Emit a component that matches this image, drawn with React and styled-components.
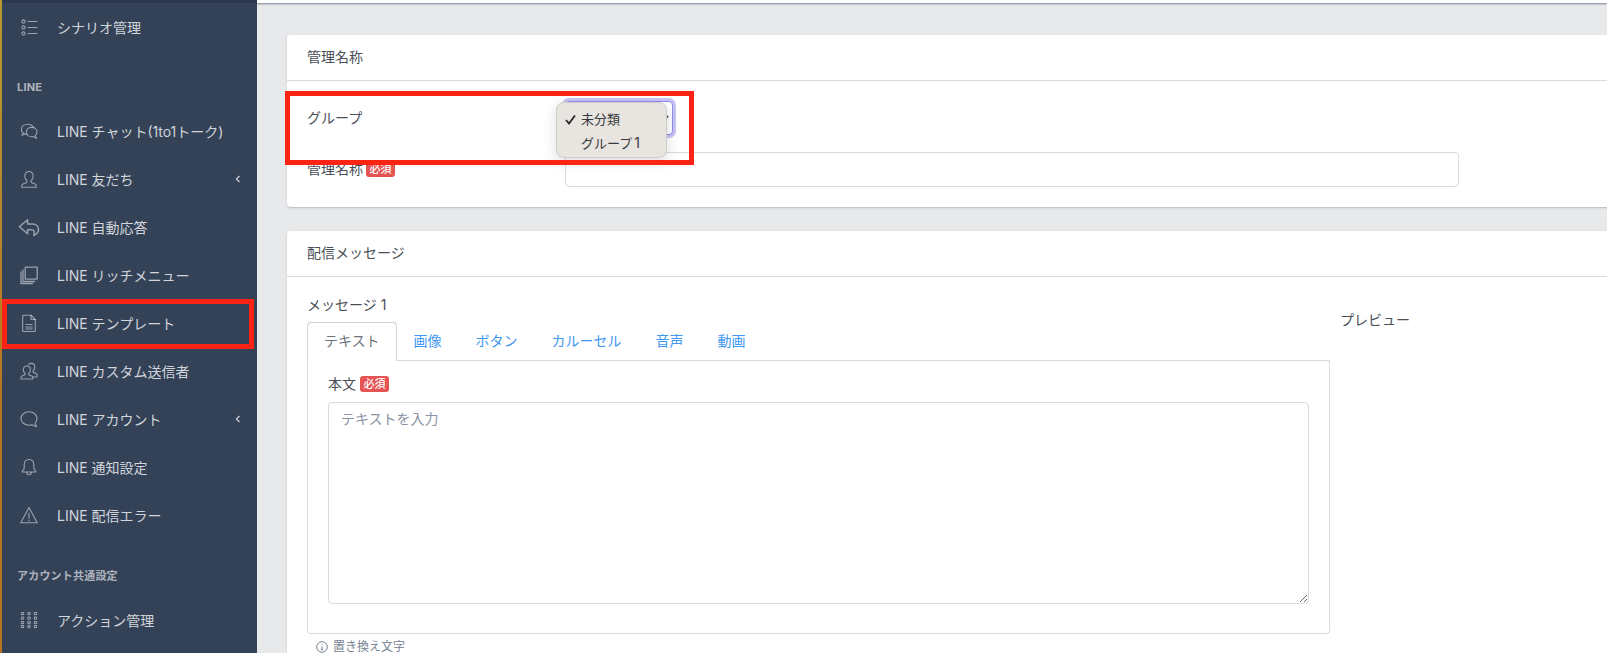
import React from 'react';
import styled, { createGlobalStyle } from 'styled-components';

const GlobalStyle = createGlobalStyle`
  html, body {
    margin: 0;
    padding: 0;
    background: #e8e9eb;
  }
  body {
    font-family: 'Inter', 'Noto Sans CJK JP', sans-serif;
    font-size: 14px;
    line-height: 21px;
    color: #4a4f57;
  }
  * {
    box-sizing: border-box;
  }
`;

const Page = styled.div`
  position: relative;
  display: flex;
  width: 1607px;
  height: 653px;
  overflow: hidden;
`;

const Sidebar = styled.aside`
  flex: 0 0 257px;
  display: flex;
  flex-direction: column;
  background: #344258;
  border-left: 2px solid;
  border-image: linear-gradient(180deg, #b59a30, #b8761f 60%, #b8761f) 1;
`;

const SidebarTop = styled.div`
  height: 3px;
  flex: none;
  background: #2b3750;
`;

const NavTitle = styled.div`
  height: ${p => p.$height}px;
  padding: ${p => p.$pad}px 0 0 15px;
  font-size: 11px;
  line-height: 24px;
  font-weight: 700;
  letter-spacing: 0.2px;
  color: rgba(255, 255, 255, 0.62);
`;

const NavRow = styled.div`
  height: 48px;
  flex: none;
  display: flex;
  align-items: center;
  padding: 0 16px 0 18px;
  color: rgba(255, 255, 255, 0.78);
  font-size: 14px;
`;

const NavIcon = styled.svg`
  width: 18px;
  height: 18px;
  flex: none;
  margin-right: 19px;
  overflow: visible;
  fill: none;
  stroke: rgba(255, 255, 255, 0.5);
  stroke-width: 1.1;
  stroke-linejoin: round;
  stroke-linecap: round;
`;

const NavLabel = styled.span`
  flex: 1;
  white-space: nowrap;
`;

const Chevron = styled.svg`
  width: 6px;
  height: 8px;
  flex: none;
  fill: none;
  stroke: rgba(255, 255, 255, 0.7);
  stroke-width: 1.4;
`;

const Main = styled.main`
  flex: 1;
  min-width: 0;
  display: flex;
  flex-direction: column;
`;

const TopStrip = styled.div`
  height: 3px;
  flex: none;
  background: #fff;
  box-shadow: 0 1px 2px rgba(40, 50, 70, 0.55);
`;

const Content = styled.div`
  padding: 32px 0 0 30px;
  margin-right: -8px;
`;

const Card = styled.section`
  background: #fff;
  border-radius: 4px;
  box-shadow: 0 1px 1px rgba(60, 75, 100, 0.16), 0 1px 3px rgba(60, 75, 100, 0.14);
  margin-bottom: 24px;
`;

const CardHeader = styled.header`
  height: 46px;
  padding: 0 20px 2px;
  display: flex;
  align-items: center;
  border-bottom: 1px solid #d8dbe0;
`;

const FormBody = styled.div`
  padding: 20px 0 20px 20px;
`;

const FormRow = styled.div`
  display: flex;
  margin-bottom: ${p => p.$gap || 0}px;
`;

const FormLabel = styled.label`
  flex: 0 0 258px;
  padding-top: ${p => p.$top}px;
  display: flex;
  align-items: flex-start;
  gap: 3px;
`;

const Required = styled.span`
  display: inline-block;
  width: 29px;
  height: 16px;
  margin-top: 3px;
  border-radius: 3px;
  background: #e55353;
  color: #fff;
  font-size: 11px;
  line-height: 16px;
  font-weight: 500;
  text-align: center;
`;

const SelectWrap = styled.div`
  position: relative;
  width: 108px;
  height: 34px;
`;

const SelectBox = styled.select`
  display: block;
  width: 100%;
  height: 100%;
  padding: 0 8px;
  font: inherit;
  color: #4a4f57;
  background: #fff;
  border: 1px solid #958bec;
  border-radius: 4px;
  box-shadow: 0 0 0 3px #c8c4f3;
  outline: none;
`;

const Menu = styled.div`
  position: absolute;
  left: -9px;
  top: 1px;
  width: 111px;
  height: 56px;
  padding: 5px 0;
  background: #e8e5e1;
  border: 1px solid #cfcdc9;
  border-radius: 8px;
  box-shadow: 0 4px 14px rgba(0, 0, 0, 0.14);
  font-size: 13px;
  color: #36393d;
`;

const MenuItem = styled.div`
  position: relative;
  height: 23px;
  line-height: 23px;
  padding-left: 24px;
  white-space: nowrap;
`;

const MenuCheck = styled.svg`
  position: absolute;
  left: 8px;
  top: 6px;
  width: 11px;
  height: 11px;
  fill: none;
  stroke: #26282b;
  stroke-width: 1.8;
`;

const MenuDigit = styled.span`
  margin-left: 2px;
  font-size: 14px;
`;

const TextInput = styled.input`
  display: block;
  width: 894px;
  height: 35px;
  border: 1px solid #d8dbe0;
  border-radius: 4px;
  background: #fff;
  outline: none;
`;

const MessageBody = styled.div`
  display: flex;
  padding: 17px 0 0 20px;
`;

const EditorColumn = styled.div`
  flex: 0 0 1023px;
`;

const PreviewColumn = styled.div`
  padding: 15px 0 0 10px;
`;

const MessageLabel = styled.div`
  height: 21px;
  margin-bottom: 7px;
`;

const Tabs = styled.div`
  display: flex;
  height: 39px;
  border-bottom: 1px solid #d8dbe0;
`;

const Tab = styled.div`
  height: ${p => (p.$active ? '39px' : '38px')};
  padding: 0 16px;
  line-height: 36px;
  border: 1px solid ${p => (p.$active ? '#d0d3d8' : 'transparent')};
  border-bottom: ${p => (p.$active ? '1px solid #fff' : '0')};
  border-radius: 4px 4px 0 0;
  background: ${p => (p.$active ? '#fff' : 'transparent')};
  color: ${p => (p.$active ? '#6c727b' : '#3f97f0')};
`;

const TabPanel = styled.div`
  padding: 12px 20px 29px;
  border: 1px solid #d8dbe0;
  border-top: 0;
  border-radius: 0 0 4px 4px;
`;

const BodyLabel = styled.div`
  display: flex;
  gap: 4px;
  height: 21px;
  margin-bottom: 8px;
`;

const BodyText = styled.textarea`
  display: block;
  width: 100%;
  height: 202px;
  padding: 5px 12px;
  font: inherit;
  color: #4a4f57;
  border: 1px solid #d8dbe0;
  border-radius: 4px;
  outline: none;
  &::placeholder {
    color: #8a93a2;
    opacity: 1;
  }
`;

const HelpLine = styled.div`
  display: flex;
  align-items: center;
  gap: 5px;
  margin: 4px 0 0 9px;
  font-size: 12px;
  line-height: 18px;
  color: #768192;
`;

const InfoIcon = styled.svg`
  width: 12px;
  height: 12px;
  flex: none;
  fill: none;
  stroke: #768192;
  stroke-width: 1;
`;

const Annotation = styled.div`
  position: absolute;
  left: ${p => p.$x}px;
  top: ${p => p.$y}px;
  width: ${p => p.$w}px;
  height: ${p => p.$h}px;
  border: 5px solid #fb2414;
  pointer-events: none;
`;

const icons = {
  list: (
    <>
      <circle cx="3.5" cy="3.5" r="1.6" />
      <circle cx="3.5" cy="9.5" r="1.6" />
      <circle cx="3.5" cy="15.5" r="1.6" />
      <path d="M8 3.5h9M8 9.5h9M8 15.5h9" />
    </>
  ),
  chat: (
    <>
      <path d="M7.5 12.2C4 12.2 1.4 10.2 1.4 7.4 1.4 4.4 4 2.2 7.6 2.2c2.6 0 4.8 1.2 5.8 3M3.4 11l-1.6 2.2 3.6-1.2" />
      <path d="M11.6 5.4c3 0 5.4 2 5.4 4.6 0 1.5-.7 2.6-1.7 3.4l1.2 3-3.2-1.8c-.6.1-1.1.2-1.7.2-3 0-5.3-2-5.3-4.8 0-2.6 2.3-4.6 5.3-4.6z" />
    </>
  ),
  user: (
    <path d="M9 1.5c-2.6 0-4.2 1.9-4.2 4.6 0 1.9.9 3.4 2 4.3v2L3 13.9c-.8.3-1.2.9-1.2 1.7v1.6h14.4v-1.6c0-.8-.4-1.4-1.2-1.7l-3.8-1.5v-2c1.1-.9 2-2.4 2-4.3 0-2.7-1.600-4.600-4.200-4.600z" />
  ),
  undo: (
    <path d="M7.600 1.800L-.6 8.800l8.200 7v-4h3.800c2.600 0 3.800 1.800 2.400 5.700 3-1.400 4.700-3.400 4.700-5.700 0-3.500-2.500-5.700-6-5.700H7.600z" strokeWidth="1.5" />
  ),
  library: (
    <>
      <rect x="5.200" y="1.200" width="12" height="12" rx="0.5" strokeWidth="1.300" />
      <path d="M3 3.800v11.700h11.700M1 6v11.500h11.500" strokeWidth="1.300" />
    </>
  ),
  doc: (
    <>
      <path d="M3 1.200h8l4.300 4.300v11.500c0 .3-.2.500-.5.500H3.200c-.3 0-.5-.2-.5-.5V1.500c0-.2.100-.3.300-.3z" />
      <path d="M11 1.200v4.300h4.300M5.800 10.500h6.400M5.800 13h6.400M5.800 15h6.400" />
    </>
  ),
  people: (
    <>
      <path d="M6.800 4c-2.200 0-3.500 1.600-3.500 3.800 0 1.500.7 2.800 1.700 3.500v1.500l-3 1.200c-.7.300-1 .7-1 1.400V17h11.700v-1.600c0-.7-.3-1.100-1-1.400l-3-1.200v-1.500c1-.7 1.700-2 1.700-3.500C10.400 5.600 9 4 6.800 4z" />
      <path d="M8.500 2.400c.7-.6 1.700-1 2.700-1 2.200 0 3.600 1.600 3.600 3.800 0 1.500-.7 2.800-1.700 3.500v1.500l2.700 1.100c.8.300 1.200.8 1.200 1.500v2.200h-3.800" />
    </>
  ),
  comment: (
    <path d="M9 1.800c-4.500 0-8 2.900-8 6.700s3.500 6.700 8 6.700c1.100 0 2.100-.2 3-.5l4.600 2.100-1.500-3.600c1.200-1.200 1.900-2.800 1.900-4.700 0-3.800-3.500-6.700-8-6.700z" />
  ),
  bell: (
    <>
      <path d="M9 1.500c-3 0-4.800 2.200-4.800 5.200v3.200c0 1.500-1 2.300-2 3.300v.8h13.600V13c-1-1-2-1.800-2-3.300V6.700c0-3-1.800-5.200-4.800-5.200z" />
      <path d="M6.700 14.300c0 1.500 1 2.500 2.300 2.500s2.300-1 2.300-2.500" />
    </>
  ),
  warning: (
    <>
      <path d="M9 1.500L.8 16.800h16.400z" />
      <path d="M9 7v5.500M9 14v1" />
    </>
  ),
  apps: (
    <>
      {[2.500, 7, 11.500, 15.500].map(y =>
        [2.500, 9, 15.500].map(x => <circle key={`${x}-${y}`} cx={x} cy={y} r="1.300" />)
      )}
    </>
  ),
};

const NavItem = ({ icon, label, sub }) => (
  <NavRow>
    <NavIcon viewBox="0 0 18 18">{icons[icon]}</NavIcon>
    <NavLabel>{label}</NavLabel>
    {sub && (
      <Chevron viewBox="0 0 6 8">
        <path d="M4.500 1L1.500 4l3 3" />
      </Chevron>
    )}
  </NavRow>
);

const App = () => (
  <Page>
    <GlobalStyle />
    <Sidebar>
      <SidebarTop />
      <NavItem icon="list" label="シナリオ管理" />
      <NavTitle $height={56} $pad={24}>LINE</NavTitle>
      <NavItem icon="chat" label="LINE チャット(1to1トーク)" />
      <NavItem icon="user" label="LINE 友だち" sub />
      <NavItem icon="undo" label="LINE 自動応答" />
      <NavItem icon="library" label="LINE リッチメニュー" />
      <NavItem icon="doc" label="LINE テンプレート" />
      <NavItem icon="people" label="LINE カスタム送信者" />
      <NavItem icon="comment" label="LINE アカウント" sub />
      <NavItem icon="bell" label="LINE 通知設定" />
      <NavItem icon="warning" label="LINE 配信エラー" />
      <NavTitle $height={57} $pad={25}>アカウント共通設定</NavTitle>
      <NavItem icon="apps" label="アクション管理" />
    </Sidebar>

    <Main>
      <TopStrip />
      <Content>
        <Card>
          <CardHeader>管理名称</CardHeader>
          <FormBody>
            <FormRow $gap={17}>
              <FormLabel $top={6}>グループ</FormLabel>
              <SelectWrap>
                <SelectBox defaultValue="none">
                  <option value="none">未分類</option>
                  <option value="g1">グループ1</option>
                </SelectBox>
                <Menu>
                  <MenuItem>
                    <MenuCheck viewBox="0 0 11 11">
                      <path d="M1 6l3 3.500L10 1.500" />
                    </MenuCheck>
                    未分類
                  </MenuItem>
                  <MenuItem>
                    グループ<MenuDigit>1</MenuDigit>
                  </MenuItem>
                </Menu>
              </SelectWrap>
            </FormRow>
            <FormRow>
              <FormLabel $top={6}>
                管理名称
                <Required>必須</Required>
              </FormLabel>
              <TextInput />
            </FormRow>
          </FormBody>
        </Card>

        <Card>
          <CardHeader>配信メッセージ</CardHeader>
          <MessageBody>
            <EditorColumn>
              <MessageLabel>メッセージ 1</MessageLabel>
              <Tabs>
                <Tab $active>テキスト</Tab>
                <Tab>画像</Tab>
                <Tab>ボタン</Tab>
                <Tab>カルーセル</Tab>
                <Tab>音声</Tab>
                <Tab>動画</Tab>
              </Tabs>
              <TabPanel>
                <BodyLabel>
                  本文
                  <Required>必須</Required>
                </BodyLabel>
                <BodyText placeholder="テキストを入力" />
              </TabPanel>
              <HelpLine>
                <InfoIcon viewBox="0 0 12 12">
                  <circle cx="6" cy="6" r="5.300" />
                  <path d="M6 5.200v3.600M6 3.200v1M4.800 8.800h2.400" />
                </InfoIcon>
                置き換え文字
              </HelpLine>
            </EditorColumn>
            <PreviewColumn>プレビュー</PreviewColumn>
          </MessageBody>
        </Card>
      </Content>
    </Main>

    <Annotation $x={2} $y={299} $w={252} $h={50} />
    <Annotation $x={285} $y={91} $w={409} $h={74} />
  </Page>
);

export default App;
